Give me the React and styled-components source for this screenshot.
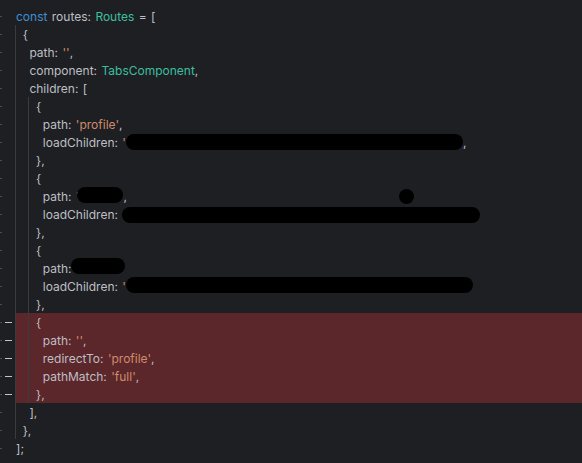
import styled, { createGlobalStyle } from 'styled-components'

const GlobalStyle = createGlobalStyle`
  html, body {
    margin: 0;
    background: #1e1f23;
  }
`

const GUIDE = '#393b41'

const guideBackground = (guides) =>
  guides
    .map(
      (x) =>
        `linear-gradient(to right, transparent ${x}px, ${GUIDE} ${x}px, ${GUIDE} ${x + 1}px, transparent ${x + 1}px)`
    )
    .join(', ') || 'none'

const Editor = styled.div`
  width: 582px;
  height: 463px;
  padding-top: 7px;
  box-sizing: border-box;
  background: #1e1f23;
  font-family: Inter, 'Noto Sans', sans-serif;
  font-size: 12px;
  word-spacing: 1px;
  color: #bdbfc4;
  overflow: hidden;
`

const Line = styled.div`
  position: relative;
  display: flex;
  align-items: center;
  height: 18px;
  white-space: pre;
  background-color: ${(p) => (p.$removed ? '#5c272b' : 'transparent')};
  background-image: ${(p) => guideBackground(p.$guides)};
`

const Gutter = styled.div`
  display: flex;
  align-items: center;
  width: 15px;
  height: 100%;
  flex-shrink: 0;
  background: #1e1f23;
`

const Tick = styled.span`
  width: 2px;
  height: 1px;
  background: #4a4c52;
`

const Minus = styled.span`
  width: 7px;
  height: 1px;
  margin-left: 3px;
  background: #c4c4c4;
`

const Code = styled.div`
  display: flex;
  align-items: center;
  padding-left: ${(p) => 1 + p.$indent * 3.35}px;
`

const Kw = styled.span`
  color: #3f8fd2;
`

const Type = styled.span`
  color: #3cbf9f;
`

const Str = styled.span`
  color: #cf8b6c;
`

const Redact = styled.span`
  display: inline-block;
  width: ${(p) => p.$w}px;
  height: 16px;
  margin-top: ${(p) => p.$dy || 0}px;
  margin-left: ${(p) => p.$dx || 0}px;
  border-radius: 8px;
  background: #000;
`

const Dot = styled.span`
  position: absolute;
  left: 399px;
  top: -16px;
  width: 15px;
  height: 15px;
  border-radius: 50%;
  background: #000;
`

const lines = [
  { i: 0, c: <><Kw>const</Kw> routes: <Type>Routes</Type> = [</> },
  { i: 2, c: <>{'{'}</> },
  { i: 4, c: <>path: <Str>''</Str>,</> },
  { i: 4, c: <>component: <Type>TabsComponent</Type>,</> },
  { i: 4, c: <>children: [</> },
  { i: 6, c: <>{'{'}</> },
  { i: 8, c: <>path: <Str>'profile'</Str>,</> },
  { i: 8, c: <>loadChildren: <Str>'</Str><Redact $w={337} $dy={-1} />,</> },
  { i: 6, c: <>{'},'}</> },
  { i: 6, c: <>{'{'}</> },
  { i: 8, c: <>path: <Str>'</Str><Redact $w={46} $dy={-3} $dx={-2} />,</> },
  { i: 8, c: <>loadChildren: <Redact $w={358} $dy={2} /></>, dot: true },
  { i: 6, c: <>{'},'}</> },
  { i: 6, c: <>{'{'}</> },
  { i: 8, c: <>path:<Redact $w={54} $dy={-5} /></> },
  { i: 8, c: <>loadChildren: <Str>'</Str><Redact $w={347} $dy={-2} /></> },
  { i: 6, c: <>{'},'}</> },
  { i: 6, c: <>{'{'}</>, r: true },
  { i: 8, c: <>path: <Str>''</Str>,</>, r: true },
  { i: 8, c: <>redirectTo: <Str>'profile'</Str>,</>, r: true },
  { i: 8, c: <>pathMatch: <Str>'full'</Str>,</>, r: true },
  { i: 6, c: <>{'},'}</>, r: true },
  { i: 4, c: <>],</> },
  { i: 2, c: <>{'},'}</> },
  { i: 0, c: <>];</> },
]

export default function App() {
  return (
    <>
      <GlobalStyle />
      <Editor>
        {lines.map((l, n) => {
          const guides = []
          if (n >= 1 && n <= 23) guides.push(15)
          if (n >= 5 && n <= 21) guides.push(28)
          return (
            <Line key={n} $removed={l.r} $guides={guides}>
              <Gutter>
                <Tick />
                {l.r && <Minus />}
              </Gutter>
              <Code $indent={l.i}>{l.c}</Code>
              {l.dot && <Dot />}
            </Line>
          )
        })}
      </Editor>
    </>
  )
}
